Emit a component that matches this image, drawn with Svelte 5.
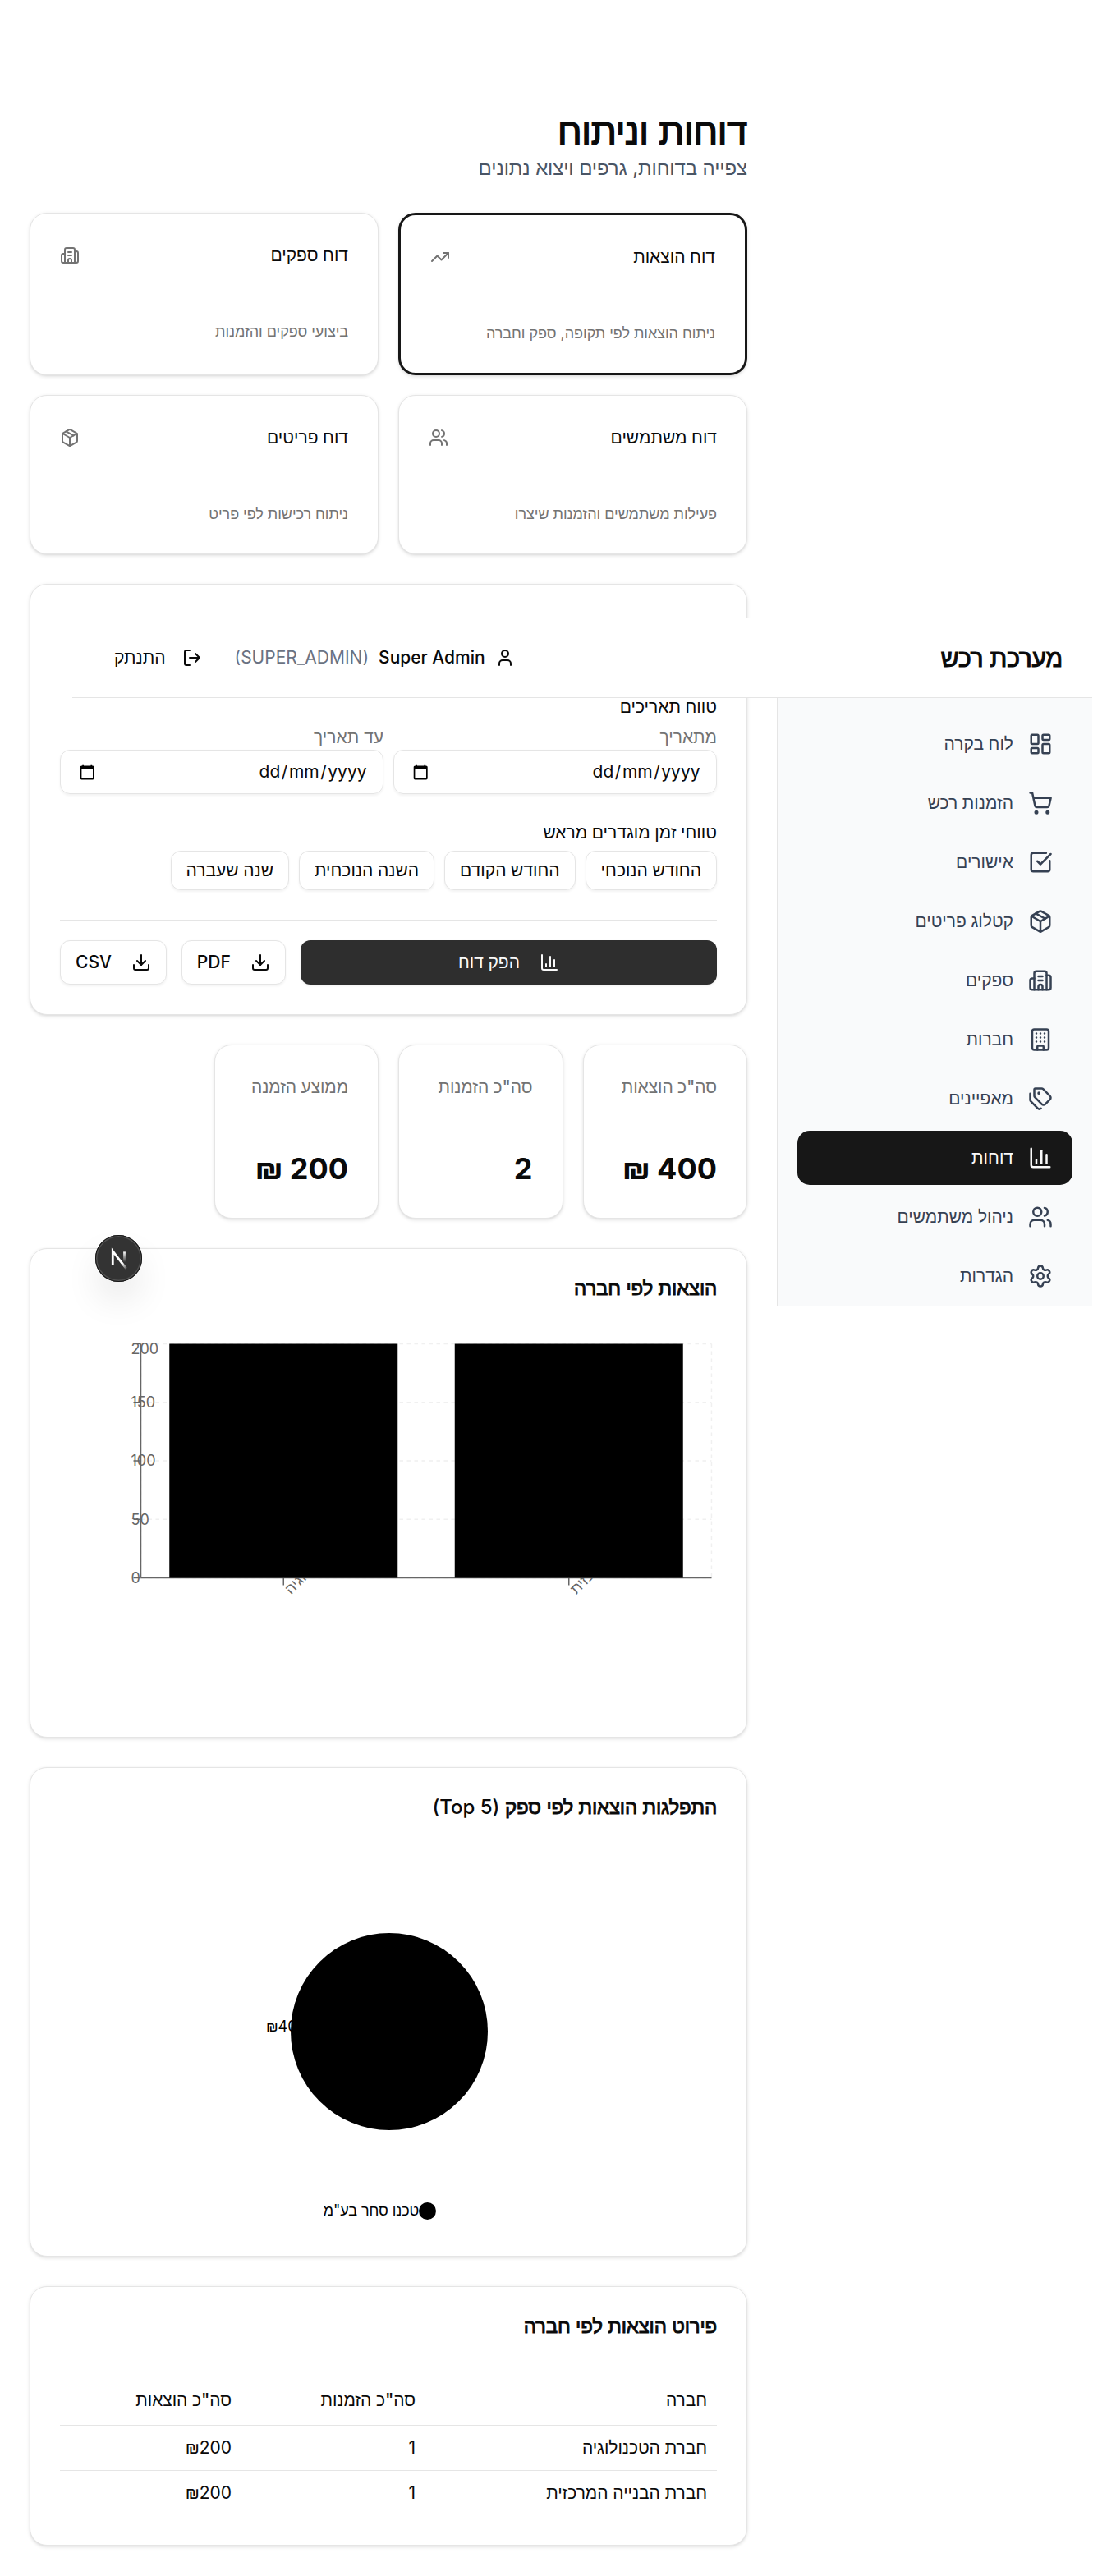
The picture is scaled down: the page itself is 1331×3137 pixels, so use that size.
<script>
  const icons = {
    dashboard: ['M4 3h5a1 1 0 0 1 1 1v7a1 1 0 0 1-1 1H4a1 1 0 0 1-1-1V4a1 1 0 0 1 1-1z', 'M15 3h5a1 1 0 0 1 1 1v3a1 1 0 0 1-1 1h-5a1 1 0 0 1-1-1V4a1 1 0 0 1 1-1z', 'M15 12h5a1 1 0 0 1 1 1v7a1 1 0 0 1-1 1h-5a1 1 0 0 1-1-1v-7a1 1 0 0 1 1-1z', 'M4 16h5a1 1 0 0 1 1 1v3a1 1 0 0 1-1 1H4a1 1 0 0 1-1-1v-3a1 1 0 0 1 1-1z'],
    cart: ['M7 21a1 1 0 1 0 2 0a1 1 0 1 0-2 0', 'M18 21a1 1 0 1 0 2 0a1 1 0 1 0-2 0', 'M2.05 2.05h2l2.66 12.42a2 2 0 0 0 2 1.58h9.78a2 2 0 0 0 1.95-1.57l1.65-7.43H5.12'],
    check: ['M21 10.5V19a2 2 0 0 1-2 2H5a2 2 0 0 1-2-2V5a2 2 0 0 1 2-2h12.5', 'm9 11 3 3L22 4'],
    box: ['M11 21.73a2 2 0 0 0 2 0l7-4A2 2 0 0 0 21 16V8a2 2 0 0 0-1-1.73l-7-4a2 2 0 0 0-2 0l-7 4A2 2 0 0 0 3 8v8a2 2 0 0 0 1 1.73z', 'M12 22V12', 'M3.29 7 12 12l8.71-5', 'm7.5 4.27 9 5.15'],
    supplier: ['M10 12h4', 'M10 8h4', 'M14 21v-3a2 2 0 0 0-4 0v3', 'M6 10H4a2 2 0 0 0-2 2v7a2 2 0 0 0 2 2h16a2 2 0 0 0 2-2V9a2 2 0 0 0-2-2h-2', 'M6 21V5a2 2 0 0 1 2-2h8a2 2 0 0 1 2 2v16'],
    building: ['M6 2h12a2 2 0 0 1 2 2v16a2 2 0 0 1-2 2H6a2 2 0 0 1-2-2V4a2 2 0 0 1 2-2z', 'M9 22v-3a1 1 0 0 1 1-1h4a1 1 0 0 1 1 1v3', 'M8 6h.01M12 6h.01M16 6h.01M8 10h.01M12 10h.01M16 10h.01M8 14h.01M12 14h.01M16 14h.01'],
    tags: ['M13.172 2a2 2 0 0 1 1.414.586l6.71 6.71a2.4 2.4 0 0 1 0 3.408l-4.592 4.592a2.4 2.4 0 0 1-3.408 0l-6.71-6.71A2 2 0 0 1 6 9.172V3a1 1 0 0 1 1-1z', 'M2 7v6.172a2 2 0 0 0 .586 1.414l6.71 6.71a2.4 2.4 0 0 0 3.191.193', 'M10 6.5a.5.5 0 1 0 1 0a.5.5 0 1 0-1 0'],
    chart: ['M3 3v16a2 2 0 0 0 2 2h16', 'M18 17V9', 'M13 17V5', 'M8 17v-3'],
    users: ['M16 21v-2a4 4 0 0 0-4-4H6a4 4 0 0 0-4 4v2', 'M16 3.128a4 4 0 0 1 0 7.744', 'M22 21v-2a4 4 0 0 0-3-3.87', 'M5 7a4 4 0 1 0 8 0a4 4 0 1 0-8 0'],
    settings: ['M9.671 4.136a2.34 2.34 0 0 1 4.659 0 2.34 2.34 0 0 0 3.319 1.915 2.34 2.34 0 0 1 2.33 4.033 2.34 2.34 0 0 0 0 3.831 2.34 2.34 0 0 1-2.33 4.033 2.34 2.34 0 0 0-3.319 1.915 2.34 2.34 0 0 1-4.659 0 2.34 2.34 0 0 0-3.32-1.915 2.34 2.34 0 0 1-2.33-4.033 2.34 2.34 0 0 0 0-3.831A2.34 2.34 0 0 1 6.35 6.051a2.34 2.34 0 0 0 3.319-1.915', 'M9 12a3 3 0 1 0 6 0a3 3 0 1 0-6 0'],
    user: ['M19 21v-2a4 4 0 0 0-4-4H9a4 4 0 0 0-4 4v2', 'M8 7a4 4 0 1 0 8 0a4 4 0 1 0-8 0'],
    logout: ['m16 17 5-5-5-5', 'M21 12H9', 'M9 21H5a2 2 0 0 1-2-2V5a2 2 0 0 1 2-2h4'],
    download: ['M12 15V3', 'M21 15v4a2 2 0 0 1-2 2H5a2 2 0 0 1-2-2v-4', 'm7 10 5 5 5-5'],
    trend: ['M16 7h6v6', 'm22 7-8.5 8.5-5-5L2 17'],
  };

  const reports = [
    { title: 'דוח הוצאות', text: 'ניתוח הוצאות לפי תקופה, ספק וחברה', icon: 'trend', active: true },
    { title: 'דוח ספקים', text: 'ביצועי ספקים והזמנות', icon: 'supplier' },
    { title: 'דוח משתמשים', text: 'פעילות משתמשים והזמנות שיצרו', icon: 'users' },
    { title: 'דוח פריטים', text: 'ניתוח רכישות לפי פריט', icon: 'box' },
  ];
  const nav = [
    ['לוח בקרה', 'dashboard'],
    ['הזמנות רכש', 'cart'],
    ['אישורים', 'check'],
    ['קטלוג פריטים', 'box'],
    ['ספקים', 'supplier'],
    ['חברות', 'building'],
    ['מאפיינים', 'tags'],
    ['דוחות', 'chart'],
    ['ניהול משתמשים', 'users'],
    ['הגדרות', 'settings'],
  ];
  const presets = ['החודש הנוכחי', 'החודש הקודם', 'השנה הנוכחית', 'שנה שעברה'];
  const stats = [
    ['סה"כ הוצאות', '\u200f400 \u200f₪'],
    ['סה"כ הזמנות', '2'],
    ['ממוצע הזמנה', '\u200f200 \u200f₪'],
  ];
  const rows = [
    ['חברת הטכנולוגיה', '1', '₪200'],
    ['חברת הבנייה המרכזית', '1', '₪200'],
  ];

  // Bar chart geometry, in chart units
  const plot = { left: 65, right: 528.33, top: 5, bottom: 195 };
  const band = (plot.right - plot.left) / rows.length;
  const bars = rows.map((r, i) => ({
    name: r[0],
    x: plot.left + band * i + band * 0.1,
    mid: plot.left + band * (i + 0.5),
    width: band * 0.8,
  }));
  const ticks = [0, 50, 100, 150, 200].map((v) => {
    const y = plot.bottom - (v / 200) * (plot.bottom - plot.top);
    return { v, y, labelY: Math.max(y, 9) };
  });
</script>

{#snippet icon(name)}
  <svg class="icon" viewBox="0 0 24 24" aria-hidden="true">
    {#each icons[name] as d}<path {d} />{/each}
  </svg>
{/snippet}

<div class="page" dir="rtl">
  <aside class="sidebar">
    <nav>
      {#each nav as [label, name]}
        <a class="nav-item" class:active={name === 'chart'} href="#{name}">
          {@render icon(name)}
          <span>{label}</span>
        </a>
      {/each}
    </nav>
  </aside>

  <main>
    <div class="heading">
      <h1>דוחות וניתוח</h1>
      <p>צפייה בדוחות, גרפים ויצוא נתונים</p>
    </div>

    <section class="reports">
      {#each reports as r}
        <article class="card report" class:selected={r.active}>
          <div class="report-head">
            <h3>{r.title}</h3>
            {@render icon(r.icon)}
          </div>
          <p>{r.text}</p>
        </article>
      {/each}
    </section>

    <section class="card filters">
      <div class="group-label">טווח תאריכים</div>
      <div class="dates">
        {#each ['מתאריך', 'עד תאריך'] as label}
          <div>
            <div class="date-label">{label}</div>
            <div class="date-input">
              <span dir="ltr"><i>dd</i>/<i>mm</i>/<i>yyyy</i></span>
              <svg class="calendar" viewBox="0 0 24 24" aria-hidden="true">
                <path d="M20 3h-1V1h-2v2H7V1H5v2H4c-1.1 0-2 .9-2 2v16c0 1.1.9 2 2 2h16c1.1 0 2-.9 2-2V5c0-1.1-.9-2-2-2zm0 18H4V8h16v13z" />
              </svg>
            </div>
          </div>
        {/each}
      </div>
      <div class="group-label preset-label">טווחי זמן מוגדרים מראש</div>
      <div class="presets">
        {#each presets as p}<button class="btn small">{p}</button>{/each}
      </div>
      <div class="actions">
        <button class="btn primary">{@render icon('chart')}<span>הפק דוח</span></button>
        <button class="btn">{@render icon('download')}<span>PDF</span></button>
        <button class="btn">{@render icon('download')}<span>CSV</span></button>
      </div>
    </section>

    <section class="stats">
      {#each stats as [label, value]}
        <article class="card stat">
          <h3>{label}</h3>
          <strong>{value}</strong>
        </article>
      {/each}
    </section>

    <section class="card panel">
      <h2>הוצאות לפי חברה</h2>
      <svg class="plot" viewBox="0 0 533.33 300" direction="ltr">
        <g class="grid">
          {#each ticks as t}<line x1={plot.left} x2={plot.right} y1={t.y} y2={t.y} />{/each}
          {#each [plot.left, ...bars.map((b) => b.mid), plot.right] as x}
            <line x1={x} x2={x} y1={plot.top} y2={plot.bottom} />
          {/each}
        </g>
        <g class="axis">
          <line x1={plot.left} x2={plot.right} y1={plot.bottom} y2={plot.bottom} />
          <line x1={plot.left} x2={plot.left} y1={plot.top} y2={plot.bottom} />
          {#each ticks as t}
            <line x1={plot.left - 6} x2={plot.left} y1={t.y} y2={t.y} />
            <text x={plot.left - 8} y={t.labelY} dy="0.355em">{t.v}</text>
          {/each}
          {#each bars as b}
            <line x1={b.mid} x2={b.mid} y1={plot.bottom} y2={plot.bottom + 6} />
            <text x={b.mid} y={plot.bottom + 8} dy="0.71em" transform="rotate(-45 {b.mid} {plot.bottom + 8})">{b.name}</text>
          {/each}
        </g>
        {#each bars as b}
          <rect x={b.x} y={plot.top} width={b.width} height={plot.bottom - plot.top} />
        {/each}
      </svg>
    </section>

    <section class="card panel">
      <h2>התפלגות הוצאות לפי ספק <b>(Top 5)</b></h2>
      <div class="pie">
        <svg class="plot" viewBox="0 0 533.33 300">
          <text x="166.6" y="138" dy="0.355em">₪400</text>
          <circle cx="266.67" cy="142" r="80" />
        </svg>
        <div class="legend"><i></i><span>טכנו סחר בע"מ</span></div>
      </div>
    </section>

    <section class="card panel">
      <h2>פירוט הוצאות לפי חברה</h2>
      <div class="table">
        <div class="row head"><span>חברה</span><span>סה"כ הזמנות</span><span>סה"כ הוצאות</span></div>
        {#each rows as r}
          <div class="row">{#each r as cell}<span>{cell}</span>{/each}</div>
        {/each}
      </div>
    </section>
  </main>

  <header class="topbar">
    <div class="brand">מערכת רכש</div>
    <div class="account">
      <div class="user">
        {@render icon('user')}
        <span class="name">Super Admin</span>
        <span class="role" dir="ltr">(SUPER_ADMIN)</span>
      </div>
      <button class="logout">{@render icon('logout')}<span>התנתק</span></button>
    </div>
  </header>

  <div class="badge">
    <svg viewBox="0 0 38 38" aria-hidden="true">
      <defs>
        <linearGradient id="diag" x1="9.95" y1="11.1" x2="14" y2="16" gradientUnits="userSpaceOnUse">
          <stop stop-color="#fff" />
          <stop offset="1" stop-color="#fff" stop-opacity="0" />
        </linearGradient>
        <linearGradient id="stem" x1="11.8" y1="1.5" x2="11.8" y2="10" gradientUnits="userSpaceOnUse">
          <stop stop-color="#fff" />
          <stop offset="1" stop-color="#fff" stop-opacity="0" />
        </linearGradient>
      </defs>
      <g transform="translate(11.85 12.1)">
        <path d="M13.3 15.2 2.34 1v11.6" stroke="url(#diag)" />
        <path d="M11.825 1.5v11.6" stroke="url(#stem)" />
      </g>
    </svg>
  </div>
</div>

<style>
  :global(body) {
    background: #fff;
  }
  .page {
    position: relative;
    display: flex;
    width: 1330px;
    color: #0a0a0a;
    font-family: Inter, 'Liberation Sans', sans-serif;
    font-size: 24px;
    line-height: 36px;
  }
  h1, h2, h3, p {
    margin: 0;
  }
  button {
    font: inherit;
    color: inherit;
  }
  .icon {
    flex: none;
    width: 24px;
    height: 24px;
    fill: none;
    stroke: currentColor;
    stroke-width: 2;
    stroke-linecap: round;
    stroke-linejoin: round;
  }

  /* Sidebar */
  .sidebar {
    flex: none;
    box-sizing: border-box;
    width: 384px;
    height: 740px;
    margin-top: 850px;
    padding: 23px 24px 0;
    overflow: hidden;
    border-left: 1px solid #e5e5e5;
    background: #f9fafb;
  }
  nav {
    display: flex;
    flex-direction: column;
    gap: 6px;
  }
  .nav-item {
    display: flex;
    align-items: center;
    gap: 18px;
    padding: 18px 24px;
    border-radius: 15px;
    color: #364153;
    font-size: 21px;
    font-weight: 500;
    line-height: 30px;
    text-decoration: none;
  }
  .nav-item .icon {
    width: 30px;
    height: 30px;
  }
  .nav-item.active {
    background: #171717;
    color: #fafafa;
  }

  /* Content */
  main {
    box-sizing: border-box;
    width: 946px;
    height: 3137px;
    padding: 133px 36px 36px;
    display: flex;
    flex-direction: column;
    gap: 36px;
  }
  /* Headings thicken the regular Hebrew face with a stroke */
  h1 {
    font-size: 45px;
    font-weight: 400;
    line-height: 54px;
    letter-spacing: -0.25px;
    -webkit-text-stroke: 1.5px currentColor;
  }
  .heading p {
    color: #4a5565;
    letter-spacing: -0.1px;
  }
  .card {
    box-sizing: border-box;
    padding: 36px;
    border: 1px solid #e5e5e5;
    border-radius: 21px;
    background: #fff;
    box-shadow: 0 1.5px 4.5px rgba(0, 0, 0, 0.1), 0 1.5px 3px -1.5px rgba(0, 0, 0, 0.1);
  }
  .reports {
    display: grid;
    grid-template-columns: 1fr 1fr;
    gap: 24px;
  }
  .report.selected {
    border: 3px solid #171717;
  }
  .report-head {
    display: flex;
    justify-content: space-between;
    align-items: center;
    padding-bottom: 30px;
    margin-bottom: 36px;
    color: #737373;
  }
  .report h3 {
    color: #0a0a0a;
    font-size: 21px;
    font-weight: 500;
    line-height: 30px;
  }
  .report p {
    color: #737373;
    font-size: 18px;
    line-height: 24px;
    letter-spacing: -0.05px;
  }

  /* Filters */
  .filters {
    padding-top: 138px;
    font-size: 21px;
    line-height: 30px;
  }
  .group-label {
    margin-bottom: 12px;
    font-weight: 500;
    line-height: 21px;
  }
  .preset-label {
    margin-top: 36px;
  }
  .dates {
    display: grid;
    grid-template-columns: 1fr 1fr;
    gap: 12px;
  }
  .date-label {
    color: #737373;
  }
  .date-input {
    box-sizing: border-box;
    display: flex;
    align-items: center;
    justify-content: space-between;
    height: 54px;
    padding: 0 18px 0 21.5px;
    border: 1px solid #e5e5e5;
    border-radius: 12px;
    box-shadow: 0 1.5px 3px rgba(0, 0, 0, 0.05);
  }
  .date-input i {
    padding: 0 1.5px;
    font-style: normal;
  }
  .calendar {
    width: 20.4px;
    height: 20.4px;
  }
  .presets {
    display: flex;
    gap: 12px;
  }
  .btn {
    box-sizing: border-box;
    display: flex;
    align-items: center;
    justify-content: center;
    gap: 24px;
    height: 54px;
    padding: 0 18px;
    border: 1px solid #e5e5e5;
    border-radius: 12px;
    background: #fff;
    box-shadow: 0 1.5px 3px rgba(0, 0, 0, 0.05);
    font-weight: 500;
    white-space: nowrap;
  }
  .btn.small {
    height: 48px;
  }
  .btn.primary {
    flex: 1;
    border: 0;
    background: #2e2e2e;
    color: #fafafa;
  }
  .actions {
    display: flex;
    gap: 18px;
    margin-top: 36px;
    padding-top: 24px;
    border-top: 1px solid #e5e5e5;
  }

  /* Summary figures */
  .stats {
    display: grid;
    grid-template-columns: repeat(4, 1fr);
    gap: 24px;
  }
  .stat {
    display: flex;
    flex-direction: column;
    gap: 60px;
  }
  .stat h3 {
    color: #737373;
    font-size: 21px;
    font-weight: 500;
    line-height: 30px;
    letter-spacing: -0.1px;
    white-space: nowrap;
  }
  .stat strong {
    font-size: 36px;
    font-weight: 700;
    line-height: 48px;
  }

  /* Charts and table */
  .panel h2 {
    margin-bottom: 48px;
    font-size: 24px;
    font-weight: 400;
    line-height: 24px;
    letter-spacing: -0.17px;
    -webkit-text-stroke: 0.9px currentColor;
  }
  .panel h2 b {
    font-weight: 500;
    letter-spacing: 0;
    -webkit-text-stroke: 0;
  }
  .plot {
    display: block;
    width: 800px;
    height: 450px;
    margin-right: -0.6px;
    direction: ltr;
    font-size: 12px;
  }
  .grid line {
    stroke: #f0f0f0;
    stroke-dasharray: 3 3;
  }
  .axis line {
    stroke: #666;
  }
  .axis text {
    fill: #666;
  }
  .pie {
    display: grid;
  }
  .pie > * {
    grid-area: 1 / 1;
  }
  .legend {
    display: flex;
    align-items: center;
    justify-content: center;
    align-self: end;
    height: 36px;
    margin: 0 21px 1px 0;
    color: #000;
    font-size: 18px;
    letter-spacing: -0.1px;
  }
  .legend i {
    width: 21px;
    height: 21px;
    border-radius: 50%;
    background: #000;
  }
  .table {
    font-size: 21px;
    line-height: 30px;
    letter-spacing: -0.05px;
  }
  .row {
    display: grid;
    grid-template-columns: 355px 224px 221px;
    border-bottom: 1px solid #e5e5e5;
  }
  .row:last-child {
    border-bottom: 0;
  }
  .row span {
    padding: 12px;
  }
  .row.head span {
    padding: 15px 12px;
    font-weight: 500;
  }

  /* Bar and badge that float over the content */
  .topbar {
    position: absolute;
    top: 753px;
    left: 88px;
    box-sizing: border-box;
    width: 1242px;
    height: 97px;
    padding: 0 36px;
    display: flex;
    align-items: center;
    justify-content: space-between;
    border-bottom: 1px solid #e5e5e5;
    background: #fff;
  }
  .brand {
    font-size: 30px;
    line-height: 42px;
    letter-spacing: -0.2px;
    -webkit-text-stroke: 1.1px currentColor;
  }
  .account,
  .user,
  .logout {
    display: flex;
    align-items: center;
    font-size: 21px;
    line-height: 30px;
  }
  .account {
    gap: 24px;
  }
  .user {
    gap: 12px;
  }
  .name {
    font-weight: 500;
  }
  .role {
    color: #6a7282;
  }
  .logout {
    gap: 21px;
    padding: 0 15px;
    border: 0;
    background: none;
    font-weight: 500;
  }
  .badge {
    position: absolute;
    top: 1504px;
    left: 116px;
    width: 57px;
    height: 57px;
    border-radius: 50%;
    background: #333;
    box-shadow: 0 0 0 1px #171717 inset, 0 0 0 2.5px #4f4f4f inset, 0 24px 48px -12px rgba(0, 0, 0, 0.24);
  }
  .badge svg {
    display: block;
    width: 57px;
    height: 57px;
    fill: none;
    stroke-width: 1.86;
  }
</style>
